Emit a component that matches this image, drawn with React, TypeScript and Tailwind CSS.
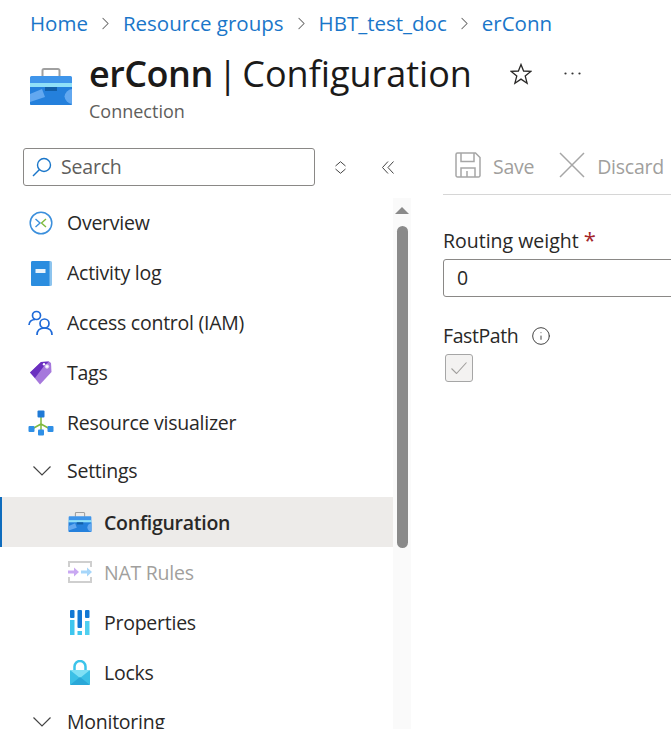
import { ChevronRight, Info } from 'lucide-react';

const FONT = "font-['Open_Sans','Noto_Sans',sans-serif]";
const NAV_TEXT = 'text-[19.500px] tracking-[-0.25px]';

function BriefcaseIcon({ className }: { className: string }) {
  return (
    <svg viewBox="0 0 42 37" className={className}>
      <path d="M12.500 9V2.500A1.500 1.500 0 0 1 14 1h14a1.500 1.500 0 0 1 1.500 1.500V9" fill="none" stroke="#a0a0a0" strokeWidth="2" />
      <path d="M0 9.500A1.500 1.500 0 0 1 1.500 8h39A1.500 1.500 0 0 1 42 9.500v26a1.500 1.500 0 0 1-1.500 1.500h-39A1.500 1.500 0 0 1 0 35.500Z" fill="#3f95ea" />
      <path d="M0 19h42v16.500a1.500 1.500 0 0 1-1.500 1.500h-39A1.500 1.500 0 0 1 0 35.500Z" fill="#2480dc" />
      <rect y="15" width="42" height="4" fill="#90e0f8" />
      <rect x="15" y="19" width="12" height="4" fill="#125fa8" />
      <path d="M0 26l12-5 3 8-15 5Z" fill="#62a8f0" />
      <path d="M42 21a8.500 8.500 0 0 0-7.500 7.500A8.500 8.500 0 0 0 42 36Z" fill="#62a8f0" />
    </svg>
  );
}

function OverviewIcon() {
  return (
    <svg viewBox="0 0 24 24" className="h-6 w-6">
      <circle cx="12" cy="12" r="10.800" fill="none" stroke="#3b8fdc" strokeWidth="1.500" />
      <path d="M6.500 8l4.500 4-4.500 4" fill="none" stroke="#3b8fdc" strokeWidth="1.400" />
      <path d="M17 8l-4.500 4 4.500 4" fill="none" stroke="#7fba3c" strokeWidth="1.400" />
    </svg>
  );
}

function ActivityIcon() {
  return (
    <svg viewBox="0 0 21 25" className="h-[25px] w-[21px]">
      <rect width="21" height="25" rx="1.500" fill="#8dc4ee" />
      <path d="M0 1.500A1.500 1.500 0 0 1 1.500 0h17v25h-17A1.500 1.500 0 0 1 0 23.500Z" fill="#2b8ddf" />
      <rect x="4.500" y="8" width="10" height="4" fill="#e8f3fb" />
    </svg>
  );
}

function AccessIcon() {
  return (
    <svg viewBox="0 0 26 26" className="h-[26px] w-[26px]" fill="none" stroke="#1f6ad8" strokeWidth="1.700">
      <circle cx="8.500" cy="5.500" r="4" />
      <path d="M1 15c0-3.500 3-5.500 6-5.500" />
      <circle cx="16.500" cy="13.500" r="4.500" />
      <path d="M9 25c0-4.500 3-7 7.500-7s7.500 2.500 7.500 7" />
    </svg>
  );
}

function TagIcon() {
  return (
    <svg viewBox="0 0 22 24" className="h-6 w-[22px]">
      <path d="M0 11.500L11 1 19 0.500 21 2 21.500 11 10 23.500Z" fill="#a678dc" />
      <path d="M0 11.500L11 1 19 0.500 14 5 5 17Z" fill="#6b2fc0" />
      <circle cx="17" cy="5.500" r="1.800" fill="#fff" stroke="#d8c6f0" />
      <circle cx="14" cy="3.300" r="1.200" fill="#fff" />
    </svg>
  );
}

function VisualizerIcon() {
  return (
    <svg viewBox="0 0 26 26" className="h-[26px] w-[26px]">
      <path d="M13 5v16M13 14L4 19M13 14l9 5" stroke="#7fba3c" strokeWidth="1.500" fill="none" />
      <rect x="9.500" y="0.500" width="7" height="7" rx="1" fill="#1f7ad6" />
      <rect x="0.500" y="16" width="6" height="6" rx="1" fill="#2f8fe6" />
      <rect x="19.500" y="16" width="6" height="6" rx="1" fill="#2f8fe6" />
      <rect x="10" y="19.500" width="6" height="6" rx="1" fill="#2f8fe6" />
    </svg>
  );
}

function NatIcon() {
  return (
    <svg viewBox="0 0 24 22" className="h-[22px] w-6">
      <path d="M1 6V1h22v5M1 16v5h22v-5" fill="none" stroke="#cfcfcf" strokeWidth="2" />
      <path d="M0 11h8.500" fill="none" stroke="#c9a8f2" strokeWidth="3" />
      <path d="M6 6.500l5 4.500-5 4.500Z" fill="#c9a8f2" />
      <path d="M13 11h8" fill="none" stroke="#a6d6fa" strokeWidth="3" />
      <path d="M19 6.500l5 4.500-5 4.500Z" fill="#a6d6fa" />
    </svg>
  );
}

function PropertiesIcon() {
  return (
    <svg viewBox="0 0 20 25" className="h-[25px] w-5">
      <rect x="0" y="0" width="4.500" height="8" rx="1" fill="#1478d4" />
      <rect x="0" y="10" width="4.500" height="15" fill="#3fc6ee" />
      <rect x="7.500" y="0" width="4.500" height="18" rx="1" fill="#1478d4" />
      <rect x="7.500" y="21" width="4.500" height="4" fill="#3fc6ee" />
      <rect x="15" y="0" width="4.500" height="8" rx="1" fill="#1478d4" />
      <rect x="15" y="11" width="4.500" height="14" fill="#50d0f0" />
    </svg>
  );
}

function LockIcon() {
  return (
    <svg viewBox="0 0 20 25" className="h-[25px] w-5">
      <path d="M4.500 11V6.500a5.500 5.500 0 0 1 11 0V11" fill="none" stroke="#3cc4ea" strokeWidth="2.500" />
      <rect y="10" width="20" height="15" rx="1" fill="#3cc0e6" />
      <path d="M0 10h20L10 18Z" fill="#7fe0f5" />
      <path d="M0 25l10-8 10 8Z" fill="#2aa8d8" />
    </svg>
  );
}

function BigChevron() {
  return (
    <svg viewBox="0 0 18 10" className="ml-[33px] mr-4 h-[10px] w-[18px]" fill="none" stroke="#444" strokeWidth="1.200">
      <path d="M0.500 0.500L9 9 17.500 0.500" />
    </svg>
  );
}

const TOP_ITEMS = [
  { label: 'Overview', icon: <OverviewIcon /> },
  { label: 'Activity log', icon: <ActivityIcon /> },
  { label: 'Access control (IAM)', icon: <AccessIcon /> },
  { label: 'Tags', icon: <TagIcon /> },
  { label: 'Resource visualizer', icon: <VisualizerIcon /> },
];

const SETTINGS_ITEMS = [
  { label: 'Configuration', icon: <BriefcaseIcon className="h-5 w-6" />, active: true },
  { label: 'NAT Rules', icon: <NatIcon />, disabled: true },
  { label: 'Properties', icon: <PropertiesIcon /> },
  { label: 'Locks', icon: <LockIcon /> },
];

function Crumb({ label, last }: { label: string; last?: boolean }) {
  return (
    <>
      <span className="text-[#1a76c9]">{label}</span>
      {!last && <ChevronRight className="h-[21px] w-[21px] text-[#666]" strokeWidth={1.2} />}
    </>
  );
}

export default function App() {
  return (
    <div className={`${FONT} flex h-[729px] w-[671px] flex-col overflow-hidden bg-white text-[#292827]`}>
      <nav className="flex h-[46px] items-center gap-[7px] pl-[30px] text-[20.500px]">
        <Crumb label="Home" />
        <Crumb label="Resource groups" />
        <Crumb label="HBT_test_doc" />
        <Crumb label="erConn" last />
      </nav>

      <header className="flex h-[102px] pl-[30px]">
        <BriefcaseIcon className="mt-[22px] h-[37px] w-[42px]" />
        <div className="ml-[17px] flex flex-col">
          <div className="flex items-center">
            <h1 className="text-[36px] leading-[55px] text-[#1b1a19] [word-spacing:-4.500px]">
              <span className="font-semibold tracking-[-0.5px]">erConn</span> | Configuration
            </h1>
            <svg viewBox="0 0 22 22" className="ml-[38px] h-[22px] w-[22px]" fill="none" stroke="#292827" strokeWidth="1.300">
              <path d="M11 1.500L13.600 8 20.800 8.400 15.200 13 17.100 20.200 11 16.100 4.900 20.200 6.800 13 1.200 8.400 8.400 8Z" />
            </svg>
            <svg viewBox="0 0 17 3" className="ml-[32px] h-[3px] w-[17px]" fill="#333">
              <circle cx="1.500" cy="1.500" r="1.100" />
              <circle cx="8.500" cy="1.500" r="1.100" />
              <circle cx="15.500" cy="1.500" r="1.100" />
            </svg>
          </div>
          <span className="text-[18px] leading-5 text-[#605e5c]">Connection</span>
        </div>
      </header>

      <div className="flex min-h-0 flex-1">
        <aside className="flex w-[411px] shrink-0 flex-col">
          <div className="flex h-[50px] shrink-0 items-start">
            <div className="ml-[23px] flex h-[38px] w-[292px] items-center rounded-[3px] border border-[#8a8886] pl-2">
              <svg viewBox="0 0 20 20" className="h-5 w-5" fill="none" stroke="#1a76c9" strokeWidth="1.400">
                <circle cx="12" cy="8" r="6.500" />
                <path d="M7.500 12.500L1 19" />
              </svg>
              <span className="ml-[9px] text-[19.500px] tracking-[-0.2px] text-[#605e5c]">Search</span>
            </div>
            <svg viewBox="0 0 11 13" className="ml-5 mt-[13px] h-[13px] w-[11px]" fill="none" stroke="#444" strokeWidth="1">
              <path d="M0.500 5L5.500 0.700 10.500 5M0.500 8L5.500 12.300 10.500 8" />
            </svg>
            <svg viewBox="0 0 12 13" className="ml-[36px] mt-[13px] h-[13px] w-3" fill="none" stroke="#444" strokeWidth="1">
              <path d="M6 0.500L0.500 6.500 6 12.500M11.500 0.500L6 6.500 11.500 12.500" />
            </svg>
          </div>

          <div className="flex min-h-0 flex-1">
            <div className="w-[393px] shrink-0">
              {TOP_ITEMS.map((item) => (
                <div key={item.label} className="flex h-[50px] items-center">
                  <span className="flex w-[67px] justify-center pl-[27px] pr-3">{item.icon}</span>
                  <span className={NAV_TEXT}>{item.label}</span>
                </div>
              ))}
              <div className="flex h-[49px] items-center pb-[3px]">
                <BigChevron />
                <span className={NAV_TEXT}>Settings</span>
              </div>
              {SETTINGS_ITEMS.map((item) => (
                <div
                  key={item.label}
                  className={`flex h-[50px] items-center ${
                    item.active ? 'border-l-2 border-[#0f6cbd] bg-[#edebe9] pl-[65px] font-semibold' : 'pl-[67px]'
                  } ${item.disabled ? 'text-[#a19f9d]' : ''}`}
                >
                  <span className="mr-[11px] flex w-[26px] justify-center">{item.icon}</span>
                  <span className={`${NAV_TEXT} pt-[2px]`}>{item.label}</span>
                </div>
              ))}
              <div className="flex h-[50px] items-center">
                <BigChevron />
                <span className={NAV_TEXT}>Monitoring</span>
              </div>
            </div>
            <div className="w-[18px] shrink-0 bg-[#fafafa]">
              <div className="mx-auto mt-[9px] h-0 w-0 border-x-[7px] border-b-[7px] border-x-transparent border-b-[#8a8a8a]" />
              <div className="mx-auto mt-[12px] h-[322px] w-[11px] rounded-full bg-[#8a8a8a]" />
            </div>
          </div>
        </aside>

        <main className="flex min-w-0 flex-1 flex-col pl-[32px]">
          <div className="flex h-[47px] shrink-0 items-start border-b border-[#d6d6d6] pl-3 text-[#a19f9d]">
            <svg viewBox="0 0 26 26" className="mt-[4px] h-[26px] w-[26px] shrink-0" fill="none" stroke="#a6a6a6" strokeWidth="1.500">
              <path d="M1 2.500A1.500 1.500 0 0 1 2.500 1h18L25 5.500v18a1.500 1.500 0 0 1-1.500 1.500h-21A1.500 1.500 0 0 1 1 23.500Z" />
              <path d="M6 1v8.500h13V1M6 25V16h14v9M12 19v6" />
            </svg>
            <span className={`ml-3 mt-[4px] ${NAV_TEXT}`}>Save</span>
            <svg viewBox="0 0 26 26" className="ml-[25px] mt-[4px] h-[26px] w-[26px] shrink-0" fill="none" stroke="#a6a6a6" strokeWidth="1.500">
              <path d="M1 1l24 24M25 1L1 25" />
            </svg>
            <span className={`ml-[12px] mt-[4px] whitespace-nowrap ${NAV_TEXT}`}>Discard</span>
          </div>

          <label className="mt-[32px] text-[19.500px] leading-[27px]">
            Routing weight <span className="text-[22px] leading-none text-[#a4262c]">*</span>
          </label>
          <div className="-mr-4 mt-[5px] flex h-[38px] shrink-0 items-center rounded-[3px] border border-[#8a8886] pl-[13px] text-[19.500px]">
            0
          </div>

          <div className="mt-[25px] flex items-center">
            <span className="text-[19.500px] leading-[27px] tracking-[-0.4px]">FastPath</span>
            <Info className="ml-[13px] h-5 w-5 text-[#444]" strokeWidth={1.2} />
          </div>
          <div className="ml-[2px] mt-[5px] flex h-[28px] w-[28px] items-center justify-center rounded-[3px] border border-[#a6a6a6] bg-[#f3f2f1]">
            <svg viewBox="0 0 16 12" className="h-3 w-4" fill="none" stroke="#a19f9d" strokeWidth="1.100">
              <path d="M0.500 6.500L5.500 11.500 15.500 0.500" />
            </svg>
          </div>
        </main>
      </div>
    </div>
  );
}
